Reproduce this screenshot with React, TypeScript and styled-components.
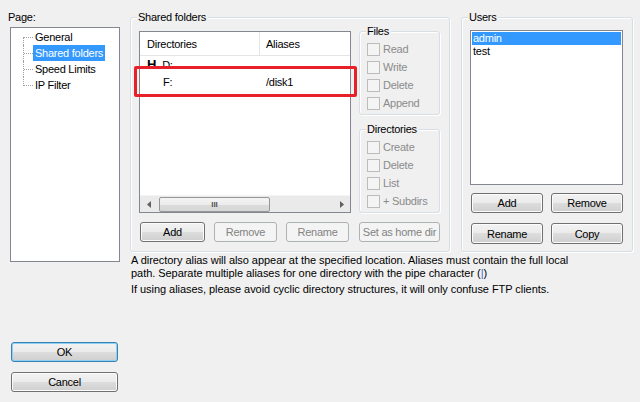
import { FC } from "react";
import styled, { createGlobalStyle } from "styled-components";

const GlobalStyle = createGlobalStyle`
  body {
    margin: 0;
    background: #f0f0f0;
  }
  * {
    box-sizing: border-box;
  }
`;

const font = `"Liberation Sans", Arial, sans-serif`;

const Dialog = styled.div`
  width: 640px;
  height: 402px;
  display: flex;
  gap: 10px;
  background: #f0f0f0;
  font-family: ${font};
  font-size: 11px;
  color: #000;
  letter-spacing: -0.25px;
  overflow: hidden;
  position: relative;
`;

const LeftColumn = styled.div`
  width: 120px;
  padding-left: 8px;
  padding-bottom: 10px;
  display: flex;
  flex-direction: column;
`;

const PageLabel = styled.div`
  margin-top: 10px;
  line-height: 14px;
`;

const TreeBox = styled.div`
  margin: 3px 0 0 2px;
  width: 110px;
  height: 235px;
  background: #fff;
  border: 1px solid #828790;
  padding-top: 1px;
`;

const TreeRow = styled.div`
  display: flex;
  height: 16px;
  align-items: center;
`;

const Connector = styled.span<{ $first?: boolean; $last?: boolean }>`
  position: relative;
  width: 10px;
  height: 16px;
  margin-left: 12px;
  flex: none;

  &::before {
    content: "";
    position: absolute;
    left: 0;
    top: ${(p) => (p.$first ? "8px" : "0")};
    bottom: ${(p) => (p.$last ? "7px" : "0")};
    border-left: 1px dotted #a0a0a0;
  }

  &::after {
    content: "";
    position: absolute;
    left: 1px;
    top: 8px;
    width: 9px;
    border-top: 1px dotted #a0a0a0;
  }
`;

const TreeLabel = styled.span<{ $selected?: boolean }>`
  padding: 0 2px;
  line-height: 16px;
  background: ${(p) => (p.$selected ? "#3399ff" : "transparent")};
  color: ${(p) => (p.$selected ? "#fff" : "#000")};
  white-space: nowrap;
`;

const Spacer = styled.div`
  flex: 1;
`;

const Button = styled.button<{ $w: number; $h?: number; $default?: boolean }>`
  width: ${(p) => p.$w}px;
  height: ${(p) => p.$h ?? 20}px;
  flex: none;
  padding: 0;
  font-family: ${font};
  font-size: 11px;
  letter-spacing: -0.25px;
  color: #000;
  border-radius: 3px;
  border: 1px solid ${(p) => (p.$default ? "#3c7fb1" : "#707070")};
  box-shadow: inset 0 0 0 1px ${(p) => (p.$default ? "#8ad2f6" : "#fcfcfc")};
  background: linear-gradient(#f2f2f2 0%, #ebebeb 50%, #dddddd 50%, #cfcfcf 100%);

  &:disabled {
    color: #838383;
    border-color: #adb2b5;
    box-shadow: none;
    background: #f4f4f4;
  }
`;

const DialogButtons = styled.div`
  display: flex;
  flex-direction: column;
  gap: 10px;
  padding-left: 3px;
`;

const RightColumn = styled.div`
  flex: 1;
  padding-top: 17px;
  display: flex;
  flex-direction: column;
`;

const GroupRow = styled.div`
  display: flex;
  gap: 11px;
`;

const GroupBox = styled.div<{ $w: number; $h: number }>`
  position: relative;
  width: ${(p) => p.$w}px;
  height: ${(p) => p.$h}px;
  border: 1px solid #d5dfe5;
  border-radius: 3px;
  box-shadow: inset 1px 1px 0 #fff, 1px 1px 0 #fff;
`;

const Legend = styled.span`
  position: absolute;
  top: -8px;
  left: 6px;
  padding: 0 2px 0 1px;
  line-height: 14px;
  background: #f0f0f0;
`;

const SharedInner = styled.div`
  padding: 13px 0 0 8px;
  display: flex;
  flex-direction: column;
`;

const SharedTop = styled.div`
  display: flex;
  gap: 8px;
`;

const ListView = styled.div`
  width: 212px;
  height: 182px;
  border: 1px solid #828790;
  background: #fff;
  display: flex;
  flex-direction: column;
`;

const HeaderRow = styled.div`
  display: flex;
  height: 24px;
  border-bottom: 1px solid #e5e5e5;
`;

const HeaderCell = styled.div<{ $w?: number }>`
  width: ${(p) => (p.$w ? `${p.$w}px` : "auto")};
  flex: ${(p) => (p.$w ? "none" : "1")};
  padding-left: ${(p) => (p.$w ? 7 : 6)}px;
  display: flex;
  align-items: center;
  border-right: ${(p) => (p.$w ? "1px solid #e5e5e5" : "none")};
`;

const Rows = styled.div`
  flex: 1;
`;

const DirRow = styled.div`
  display: flex;
  height: 17px;
  align-items: center;
`;

const DirCell = styled.div<{ $w?: number; $indent?: number }>`
  width: ${(p) => (p.$w ? `${p.$w}px` : "auto")};
  flex: ${(p) => (p.$w ? "none" : "1")};
  padding-left: ${(p) => p.$indent ?? 6}px;
  display: flex;
  align-items: center;
  gap: 6px;
`;

const DriveMark = styled.span`
  font-weight: bold;
  font-size: 13px;
`;

const HScroll = styled.div`
  height: 17px;
  display: flex;
  align-items: center;
  background: #eaeaea;
  border-top: 1px solid #f4f4f4;
`;

const ScrollArrow = styled.div`
  width: 17px;
  height: 16px;
  display: flex;
  align-items: center;
  justify-content: center;
`;

const ScrollTrack = styled.div`
  flex: 1;
  height: 16px;
  padding: 1px 0;
`;

const ScrollThumb = styled.div`
  width: 111px;
  height: 15px;
  margin-left: 2px;
  border: 1px solid #979797;
  border-radius: 2px;
  background: linear-gradient(#f4f4f4 0%, #ececec 50%, #dcdcdc 50%, #d6d6d6 100%);
  display: flex;
  align-items: center;
  justify-content: center;
  font-size: 8px;
  letter-spacing: 0;
  color: #555;
  font-weight: bold;
`;

const PermColumn = styled.div`
  display: flex;
  flex-direction: column;
  gap: 14px;
`;

const PermGroup = styled.div<{ $h: number }>`
  position: relative;
  width: 81px;
  height: ${(p) => p.$h}px;
  border: 1px solid #d5dfe5;
  border-radius: 3px;
  box-shadow: inset 1px 1px 0 #fff, 1px 1px 0 #fff;
  padding: 8px 0 0 7px;
`;

const CheckRow = styled.label`
  display: flex;
  align-items: center;
  height: 18px;
  gap: 3px;
  color: #8b8b8b;
`;

const CheckBox = styled.span`
  width: 13px;
  height: 13px;
  border: 1px solid #bcbcbc;
  background: #f4f4f4;
  flex: none;
`;

const ButtonRow = styled.div`
  display: flex;
  margin: 9px 0 0 1px;
  gap: 9px;
`;

const UsersInner = styled.div`
  padding: 12px 0 0 8px;
`;

const ListBox = styled.div`
  width: 153px;
  height: 155px;
  border: 1px solid #828790;
  background: #fff;
  padding: 1px;
`;

const ListItem = styled.div<{ $selected?: boolean }>`
  height: 13px;
  line-height: 13px;
  padding-left: 1px;
  background: ${(p) => (p.$selected ? "#3399ff" : "transparent")};
  color: ${(p) => (p.$selected ? "#fff" : "#000")};
`;

const UserButtons = styled.div<{ $top: number }>`
  display: flex;
  gap: 8px;
  margin: ${(p) => p.$top}px 0 0 1px;
`;

const Help = styled.div`
  margin-top: 2px;
  letter-spacing: -0.05px;
  line-height: 13px;
  white-space: nowrap;
`;

const HelpPara = styled.p`
  margin: 0 0 3px 1px;
`;

const Pipe = styled.span`
  color: #2e6fd8;
`;

const Highlight = styled.div`
  position: absolute;
  left: 134px;
  top: 66px;
  width: 223px;
  height: 31px;
  border: 3px solid #e8202a;
  border-radius: 2px;
`;

const treeItems = ["General", "Shared folders", "Speed Limits", "IP Filter"];
const fileRights = ["Read", "Write", "Delete", "Append"];
const dirRights = ["Create", "Delete", "List", "+ Subdirs"];

const Arrow: FC<{ dir: "left" | "right" }> = ({ dir }) => (
  <svg width="4" height="7" viewBox="0 0 4 7">
    {dir === "left" ? (
      <path d="M4 0 L0 3.5 L4 7 Z" fill="#606060" />
    ) : (
      <path d="M0 0 L4 3.5 L0 7 Z" fill="#606060" />
    )}
  </svg>
);

const App: FC = () => {
  return (
    <Dialog>
      <GlobalStyle />
      <LeftColumn>
        <PageLabel>Page:</PageLabel>
        <TreeBox>
          {treeItems.map((item, i) => (
            <TreeRow key={item}>
              <Connector $first={i === 0} $last={i === treeItems.length - 1} />
              <TreeLabel $selected={item === "Shared folders"}>{item}</TreeLabel>
            </TreeRow>
          ))}
        </TreeBox>
        <Spacer />
        <DialogButtons>
          <Button $w={107} $default>OK</Button>
          <Button $w={107}>Cancel</Button>
        </DialogButtons>
      </LeftColumn>

      <RightColumn>
        <GroupRow>
          <GroupBox $w={320} $h={235}>
            <Legend>Shared folders</Legend>
            <SharedInner>
              <SharedTop>
                <ListView>
                  <HeaderRow>
                    <HeaderCell $w={120}>Directories</HeaderCell>
                    <HeaderCell>Aliases</HeaderCell>
                  </HeaderRow>
                  <Rows>
                    <DirRow>
                      <DirCell $w={120} $indent={7}>
                        <DriveMark>H</DriveMark>
                        <span>D:</span>
                      </DirCell>
                      <DirCell />
                    </DirRow>
                    <DirRow>
                      <DirCell $w={120} $indent={23}>F:</DirCell>
                      <DirCell>/disk1</DirCell>
                    </DirRow>
                  </Rows>
                  <HScroll>
                    <ScrollArrow>
                      <Arrow dir="left" />
                    </ScrollArrow>
                    <ScrollTrack>
                      <ScrollThumb>III</ScrollThumb>
                    </ScrollTrack>
                    <ScrollArrow>
                      <Arrow dir="right" />
                    </ScrollArrow>
                  </HScroll>
                </ListView>
                <PermColumn>
                  <PermGroup $h={84}>
                    <Legend>Files</Legend>
                    {fileRights.map((r) => (
                      <CheckRow key={r}>
                        <CheckBox />
                        {r}
                      </CheckRow>
                    ))}
                  </PermGroup>
                  <PermGroup $h={84}>
                    <Legend>Directories</Legend>
                    {dirRights.map((r) => (
                      <CheckRow key={r}>
                        <CheckBox />
                        {r}
                      </CheckRow>
                    ))}
                  </PermGroup>
                </PermColumn>
              </SharedTop>
              <ButtonRow>
                <Button $w={65}>Add</Button>
                <Button $w={63} disabled>Remove</Button>
                <Button $w={63} disabled>Rename</Button>
                <Button $w={81} disabled style={{ marginLeft: 1 }}>Set as home dir</Button>
              </ButtonRow>
            </SharedInner>
          </GroupBox>

          <GroupBox $w={172} $h={235}>
            <Legend>Users</Legend>
            <UsersInner>
              <ListBox>
                <ListItem $selected>admin</ListItem>
                <ListItem>test</ListItem>
              </ListBox>
              <UserButtons $top={8}>
                <Button $w={72}>Add</Button>
                <Button $w={72}>Remove</Button>
              </UserButtons>
              <UserButtons $top={10}>
                <Button $w={72} $h={21}>Rename</Button>
                <Button $w={72} $h={21}>Copy</Button>
              </UserButtons>
            </UsersInner>
          </GroupBox>
        </GroupRow>

        <Help>
          <HelpPara>
            A directory alias will also appear at the specified location. Aliases must contain the full local
            <br />
            path. Separate multiple aliases for one directory with the pipe character (<Pipe>|</Pipe>)
          </HelpPara>
          <HelpPara>
            If using aliases, please avoid cyclic directory structures, it will only confuse FTP clients.
          </HelpPara>
        </Help>
      </RightColumn>

      <Highlight />
    </Dialog>
  );
};

export default App;
